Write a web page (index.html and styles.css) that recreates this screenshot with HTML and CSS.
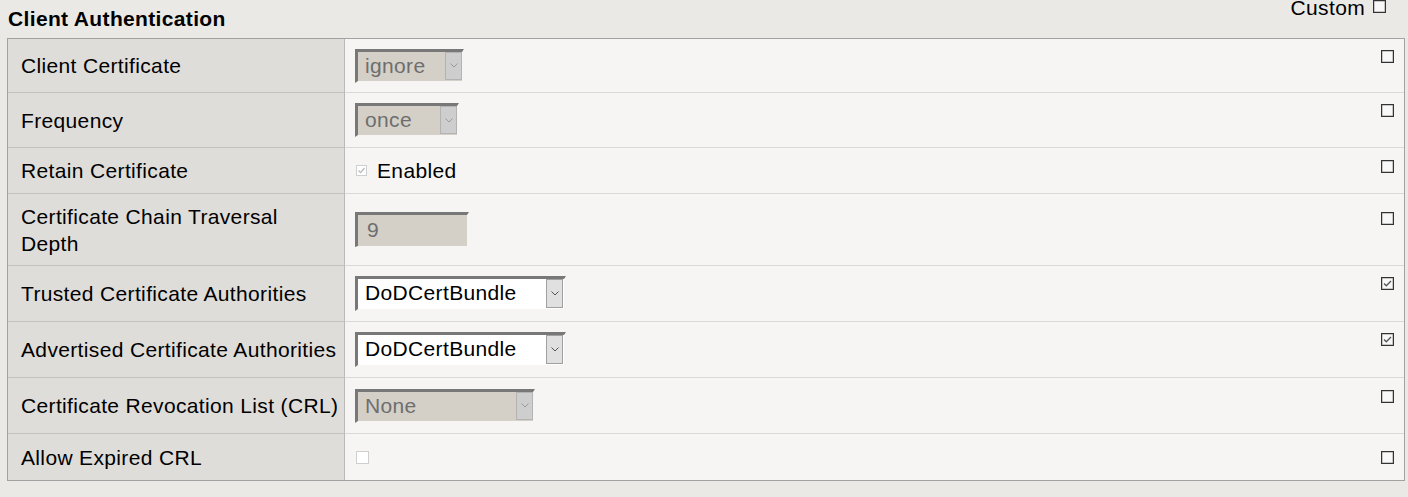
FILE: index.html
```html
<!DOCTYPE html>
<html>
<head>
<meta charset="utf-8">
<link rel="stylesheet" href="styles.css">
</head>
<body>
<div class="hdr">
  <span class="title">Client Authentication</span>
  <span class="custom"><span class="custom-l">Custom</span><span class="cb cb-dark"></span></span>
</div>
<div class="tbl">
  <div class="row h54">
    <div class="lab">Client Certificate</div>
    <div class="val"><div class="inner">
      <span class="sel dis w-ignore"><span class="txt">ignore</span><span class="arr"><svg width="8" height="5" viewBox="0 0 8 5"><path d="M0.5 0.5 L4 4 L7.5 0.5" fill="none" stroke="#9a9a9a" stroke-width="1"/></svg></span></span>
      <span class="cb cb-dark rcb"></span>
    </div></div>
  </div>
  <div class="row h55">
    <div class="lab">Frequency</div>
    <div class="val"><div class="inner">
      <span class="sel dis w-once"><span class="txt">once</span><span class="arr"><svg width="8" height="5" viewBox="0 0 8 5"><path d="M0.5 0.5 L4 4 L7.5 0.5" fill="none" stroke="#9a9a9a" stroke-width="1"/></svg></span></span>
      <span class="cb cb-dark rcb"></span>
    </div></div>
  </div>
  <div class="row h46">
    <div class="lab">Retain Certificate</div>
    <div class="val"><div class="inner">
      <span class="chk"><span class="cb cb-light small"><svg width="9" height="9" viewBox="0 0 9 9"><path d="M1.5 4.5 L3.6 6.6 L7.5 2" fill="none" stroke="#b8b8b8" stroke-width="1.2"/></svg></span><span class="chk-l">Enabled</span></span>
      <span class="cb cb-dark rcb"></span>
    </div></div>
  </div>
  <div class="row h72">
    <div class="lab">Certificate Chain Traversal<br>Depth</div>
    <div class="val"><div class="inner">
      <span class="inp dis">9</span>
      <span class="cb cb-dark"></span>
    </div></div>
  </div>
  <div class="row h56">
    <div class="lab">Trusted Certificate Authorities</div>
    <div class="val"><div class="inner">
      <span class="sel en w-dod"><span class="txt">DoDCertBundle</span><span class="arr"><svg width="8" height="5" viewBox="0 0 8 5"><path d="M0.5 0.5 L4 4 L7.5 0.5" fill="none" stroke="#555" stroke-width="1"/></svg></span></span>
      <span class="cb cb-dark rcb"><svg width="11" height="11" viewBox="0 0 11 11"><path d="M2 5.5 L4.3 7.8 L9 3" fill="none" stroke="#555" stroke-width="1.3"/></svg></span>
    </div></div>
  </div>
  <div class="row h56">
    <div class="lab">Advertised Certificate Authorities</div>
    <div class="val"><div class="inner">
      <span class="sel en w-dod"><span class="txt">DoDCertBundle</span><span class="arr"><svg width="8" height="5" viewBox="0 0 8 5"><path d="M0.5 0.5 L4 4 L7.5 0.5" fill="none" stroke="#555" stroke-width="1"/></svg></span></span>
      <span class="cb cb-dark rcb"><svg width="11" height="11" viewBox="0 0 11 11"><path d="M2 5.5 L4.3 7.8 L9 3" fill="none" stroke="#555" stroke-width="1.3"/></svg></span>
    </div></div>
  </div>
  <div class="row h56">
    <div class="lab">Certificate Revocation List (CRL)</div>
    <div class="val"><div class="inner">
      <span class="sel dis w-none"><span class="txt">None</span><span class="arr"><svg width="8" height="5" viewBox="0 0 8 5"><path d="M0.5 0.5 L4 4 L7.5 0.5" fill="none" stroke="#9a9a9a" stroke-width="1"/></svg></span></span>
      <span class="cb cb-dark rcb"></span>
    </div></div>
  </div>
  <div class="row h46 last">
    <div class="lab">Allow Expired CRL</div>
    <div class="val"><div class="inner">
      <span class="cb cb-light"></span>
      <span class="cb cb-dark"></span>
    </div></div>
  </div>
</div>
</body>
</html>
```

FILE: styles.css
```css
html, body {
  margin: 0;
  padding: 0;
  background: #ebe9e6;
  font-family: "Liberation Sans", Arial, sans-serif;
  font-size: 21px;
  letter-spacing: 0.35px;
  color: #000;
}

.hdr {
  height: 38px;
  display: flex;
  justify-content: space-between;
  align-items: flex-start;
  padding: 0 22px 0 8px;
  box-sizing: border-box;
}

.title {
  font-weight: bold;
  line-height: 24px;
  margin-top: 7px;
}

.custom {
  line-height: 15px;
  display: flex;
  align-items: flex-start;
}

.custom .cb {
  margin-left: 8px;
}

.tbl {
  margin-left: 7px;
  width: 1398px;
  border: 1px solid #a2a2a2;
  box-sizing: border-box;
}

.row {
  display: flex;
}

.h54 { height: 54px; }
.h55 { height: 55px; }
.h46 { height: 46px; }
.h72 { height: 72px; }
.h56 { height: 56px; }

.lab {
  width: 337px;
  box-sizing: border-box;
  background: #dfddd9;
  border-right: 1px solid #b9b9b9;
  border-bottom: 1px solid #c2c2c2;
  padding: 0 2px 0 13px;
  display: flex;
  align-items: center;
  white-space: nowrap;
  line-height: 27px;
}

.val {
  flex: 1;
  background: #f6f5f3;
  border-bottom: 1px solid #d9d9d9;
  display: flex;
  align-items: center;
  padding: 0 10px;
}

.last .lab, .last .val {
  border-bottom: 0;
}

.inner {
  flex: 1;
  display: flex;
  justify-content: space-between;
  align-items: flex-start;
}

.cb {
  width: 13px;
  height: 13px;
  box-sizing: border-box;
  display: inline-flex;
  align-items: center;
  justify-content: center;
  flex: none;
}

.cb-dark {
  border: 1px solid #333;
  box-shadow: inset 0 0 0 0.5px rgba(51, 51, 51, 0.5);
  background: #f8f8f8;
}

.cb-light {
  border: 1px solid #cfcfcf;
  background: #fff;
  margin-left: 1px;
}

.cb-light.small {
  width: 11px;
  height: 11px;
  margin-left: 1px;
}

.rcb {
  margin-top: 1px;
}

.chk {
  display: flex;
  align-items: center;
  line-height: 24px;
}

.chk-l {
  margin-left: 10px;
}

.sel, .inp {
  display: flex;
  box-sizing: border-box;
  height: 34px;
  border-style: solid;
  border-width: 3px 2px 2px 3px;
  border-color: #787878 #f6f5f3 #f6f5f3 #787878;
}

.dis {
  background: #d4d0c8;
  color: #6e6e6e;
}

.en {
  background: #fff;
  color: #000;
  height: 35px;
}

.sel .txt {
  flex: 1;
  padding-left: 7px;
  line-height: 28px;
  white-space: nowrap;
}

.arr {
  width: 17px;
  box-sizing: border-box;
  border: 1px solid #b3b3b3;
  background: #cecece;
  display: flex;
  align-items: center;
  justify-content: center;
  margin-bottom: 1px;
}

.en .arr {
  border-color: #a0a0a0;
  background: #e0e0e0;
  margin: 0 1px 1px 0;
}

.w-ignore { width: 109px; }
.w-once { width: 104px; }
.w-dod { width: 211px; }
.w-none { width: 180px; }

.inp {
  width: 114px;
  height: 35px;
  padding-left: 9px;
  line-height: 30px;
  border-width: 3px 2px 1px 3px;
}
```
